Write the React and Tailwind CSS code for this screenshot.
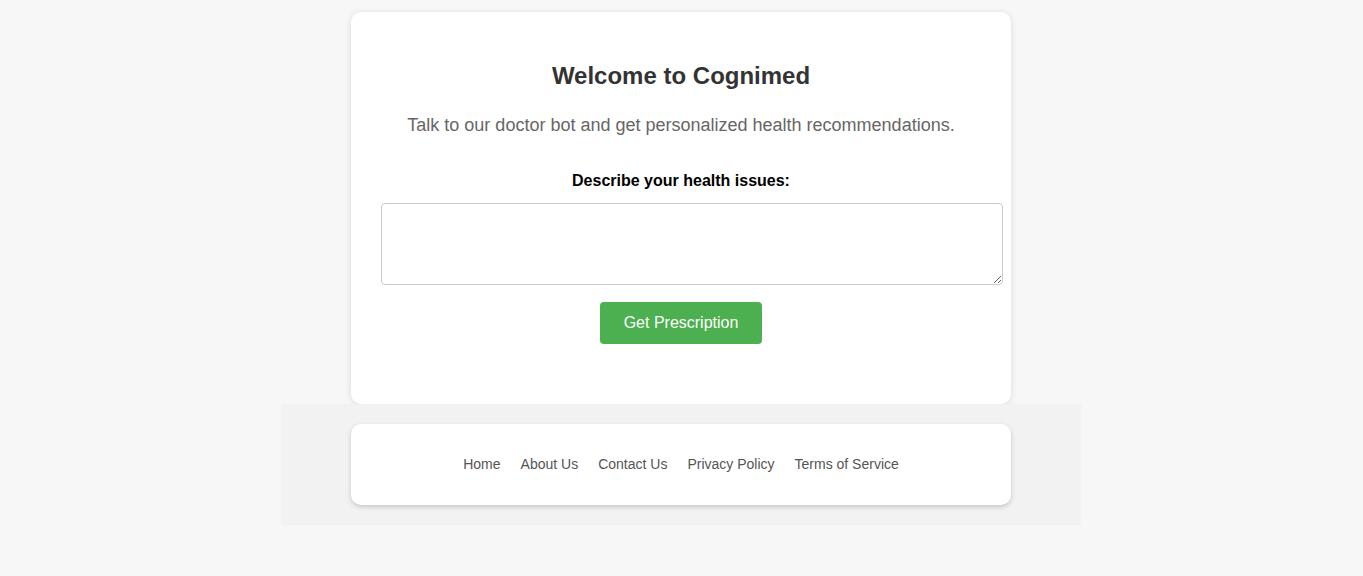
export default function App() {
  const links = ["Home", "About Us", "Contact Us", "Privacy Policy", "Terms of Service"];
  return (
    <div className="min-h-[576px] w-full bg-[#f7f7f7] pr-[1px] flex flex-col items-center" style={{ fontFamily: '"Liberation Sans", Arial, sans-serif' }}>
      <div className="mt-[12px] w-[660px] bg-white rounded-[10px] shadow-[0_1px_6px_rgba(0,0,0,0.12)] px-[30px] pt-[50px] pb-[60px] flex flex-col items-center">
        <h1 className="text-[24px] leading-[28px] font-bold text-[#333]">Welcome to Cognimed</h1>
        <p className="mt-[25px] text-[18px] leading-[21px] text-[#666]">Talk to our doctor bot and get personalized health recommendations.</p>
        <label className="mt-[36px] text-[16px] leading-[18px] font-bold text-black">Describe your health issues:</label>
        <div className="w-[600px] mt-[13px]">
          <textarea className="block w-[622px] h-[82px] border border-[#ccc] rounded-[4px] p-[10px] text-[14px] resize-y bg-white" />
        </div>
        <button className="mt-[17px] w-[162px] h-[42px] bg-[#4CAF50] text-white text-[16px] rounded-[4px]">Get Prescription</button>
      </div>
      <div className="w-[800px] bg-[#f2f2f2] py-[20px] flex justify-center">
        <div className="w-[660px] h-[81px] bg-white rounded-[10px] shadow-[0_2px_5px_rgba(0,0,0,0.18)] flex items-center justify-center">
          {links.map((l) => (
            <a key={l} className="mx-[10px] text-[14px] leading-[17px] text-[#555]">{l}</a>
          ))}
        </div>
      </div>
    </div>
  );
}
